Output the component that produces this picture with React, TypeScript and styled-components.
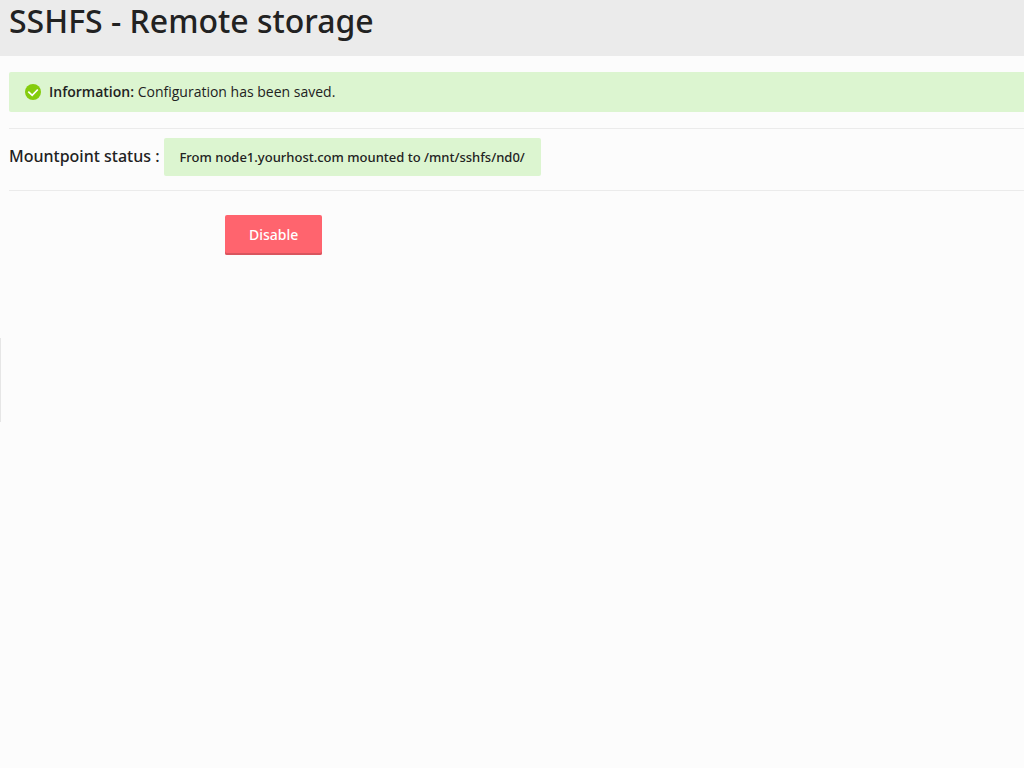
import React from 'react';
import styled, { createGlobalStyle } from 'styled-components';

const mediumFont = '"Noto Sans", "Open Sans", sans-serif';

const GlobalStyle = createGlobalStyle`
  *, *::before, *::after { box-sizing: border-box; }
  body {
    margin: 0;
    background: #fcfcfc;
    color: #222;
    font-family: "Open Sans", sans-serif;
    font-size: 14px;
    line-height: 20px;
  }
`;

const Page = styled.div`
  position: relative;
  min-height: 100vh;
`;

const Header = styled.header`
  padding: 0 9px 14px;
  background: #ebebeb;
`;

const Title = styled.h1`
  margin: 0;
  font-family: ${mediumFont};
  font-size: 32px;
  line-height: 42px;
  font-weight: 500;
`;

const Content = styled.main`
  padding: 16px 0 0 9px;
`;

const Notice = styled.div`
  display: flex;
  align-items: center;
  gap: 8px;
  padding: 10px 16px;
  background: #dcf5d0;
  border-radius: 2px 0 0 2px;
`;

const Strong = styled.strong`
  font-weight: 600;
`;

const StatusRow = styled.section`
  display: flex;
  align-items: baseline;
  gap: 4px;
  margin-top: 16px;
  padding: 9px 0 14px;
  border: solid #ebebeb;
  border-width: 1px 0;
`;

const StatusLabel = styled.h2`
  margin: 0;
  font-family: ${mediumFont};
  font-size: 16px;
  line-height: 22px;
  font-weight: 500;
`;

const StatusValue = styled.span`
  padding: 9px 16px;
  background: #dcf5d0;
  border-radius: 2px;
  font-family: ${mediumFont};
  font-size: 13px;
  font-weight: 500;
`;

const Actions = styled.form`
  padding: 24px 0 0 216px;
`;

const DangerButton = styled.button`
  display: block;
  padding: 10px 24px;
  border: 0;
  border-radius: 2px;
  background: #ff646e;
  box-shadow: inset 0 -2px #d9555e;
  color: #fff;
  font-family: ${mediumFont};
  font-size: 14px;
  font-weight: 500;
  line-height: 20px;
  cursor: pointer;
`;

const SideHandle = styled.div`
  position: absolute;
  left: 0;
  top: 338px;
  width: 1px;
  height: 84px;
  background: #e6e6e6;
`;

const CheckIcon = () => (
  <svg width="16" height="16" viewBox="0 0 16 16" aria-hidden="true">
    <circle cx="8" cy="8" r="8" fill="#84cc0c" />
    <path d="M3.3 7.6 7.2 11.4 12.8 5.5" fill="none" stroke="#fff" strokeWidth="1.7" />
  </svg>
);

export default function App() {
  return (
    <Page>
      <GlobalStyle />
      <Header>
        <Title>SSHFS - Remote storage</Title>
      </Header>
      <Content>
        <Notice role="status">
          <CheckIcon />
          <span><Strong>Information:</Strong> Configuration has been saved.</span>
        </Notice>
        <StatusRow>
          <StatusLabel>Mountpoint status :</StatusLabel>
          <StatusValue>From node1.yourhost.com mounted to /mnt/sshfs/nd0/</StatusValue>
        </StatusRow>
        <Actions onSubmit={(event) => event.preventDefault()}>
          <DangerButton type="submit">Disable</DangerButton>
        </Actions>
      </Content>
      <SideHandle />
    </Page>
  );
}
